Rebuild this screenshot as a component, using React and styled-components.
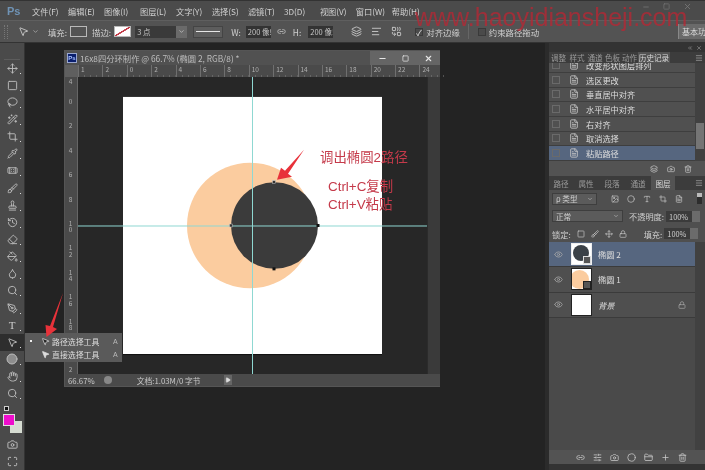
import React from 'react';
import styled, { createGlobalStyle } from 'styled-components';
import {
  MousePointer2, Move, Square, Lasso, Wand2, Crop, Pipette, Bandage, Brush, Stamp, History, Eraser,
  PaintBucket, Droplet, Hand as HandIcon, Search, Eye, Lock, Link2, Layers, FolderClosed, Trash2,
  Camera, FileText, Image as ImageIcon, Circle, Type, Minus, X, Maximize, Plus, ChevronDown, ChevronsLeft, Menu,
  PenTool, Play, SlidersHorizontal, AlignLeft, Combine,
} from 'lucide-react';

const Global = createGlobalStyle`
  html, body { margin: 0; padding: 0; background: #232323; overflow: hidden; }
  * { box-sizing: border-box; }
`;

const Shell = styled.div`
  position: relative; width: 705px; height: 470px; display: flex; flex-direction: column; overflow: hidden;
  font-family: "Noto Sans CJK SC", "Liberation Sans", sans-serif; color: #c9c9c9; background: #232323;
  filter: blur(0.4px);
`;
const MenuBar = styled.div`
  height: 20px; flex: none; display: flex; align-items: center; background: #4b4b4b; border-top: 1px solid #333; padding-left: 7px; position: relative;
`;
const PsLogo = styled.div`
  width: 15px; font: bold 11px "Liberation Sans", sans-serif; color: #6f93b5; margin-right: 10px;
`;
const MenuList = styled.div` display: flex; gap: 10.3px; `;
const MenuItem = styled.span` font-size: 8.2px; width: 25.7px; white-space: nowrap; color: #d0d0d0; `;
const WinControls = styled.div`
  margin-left: auto; width: 50px; margin-right: 13px; margin-bottom: 8px; display: flex; justify-content: space-between; align-items: center; color: #7c7c7c;
`;
const OptionsBar = styled.div`
  height: 23px; flex: none; display: flex; align-items: center; background: #535353; border-top: 1px solid #5f5f5f; border-bottom: 1px solid #333; padding-left: 4px; font-size: 8.4px;
`;
const Grip = styled.div` width: 4px; height: 14px; margin-right: 10px; border-left: 1px dotted #777; border-right: 1px dotted #777; `;
const OptLabel = styled.span` color: #cfcfcf; white-space: nowrap; margin-left: ${p => p.$ml || 0}px; `;
const ShapeSwatch = styled.div`
  width: 17px; height: 11px; border: 1px solid #b9b9b9; margin-left: ${p => p.$ml || 3}px; background: ${p => p.$stroke ? 'linear-gradient(to top left,#fff 44%,#c23b48 46%,#c23b48 54%,#fff 56%)' : 'transparent'};
`;
const NumField = styled.div`
  width: ${p => p.$w}px; height: 12px; margin-left: ${p => p.$ml || 0}px; background: ${p => p.$bg || '#3a3a3a'}; color: #c4c4c4; display: flex; align-items: center; padding-left: 2px; font-size: 7.5px; white-space: nowrap; overflow: hidden;
`;
const DropBtn = styled.div`
  width: ${p => p.$w || 11}px; height: 12px; background: #6a6a6a; display: flex; align-items: center; justify-content: center; color: #ddd;
`;
const LineDrop = styled.div`
  width: 30px; height: 12px; margin-left: 6px; background: #5d5d5d; border: 1px solid #444; display: flex; align-items: center; padding: 0 2px;
  &::before { content: ""; flex: 1; height: 1px; background: #e6e6e6; }
`;
const IconSlot = styled.span` display: inline-flex; margin-left: ${p => p.$ml || 0}px; color: ${p => p.$c || '#c8c8c8'}; `;
const Check = styled.span`
  width: 8px; height: 8px; margin-left: ${p => p.$ml || 0}px; margin-right: 3px; background: #4a4a4a; border: 1px solid #3a3a3a; color: #eee; font-size: 8px; line-height: 7px;
`;
const VSep = styled.span` width: 1px; height: 15px; background: #666; margin-left: 8px; `;
const WorkBtn = styled.div`
  margin-left: auto; width: 27px; height: 15px; background: #6a6a6a; border-left: 1px solid #888; font-size: 8px; color: #ddd; padding-left: 3px; white-space: nowrap; overflow: hidden; line-height: 15px;
`;
const Main = styled.div` flex: 1; display: flex; min-height: 0; `;
const Tools = styled.div`
  width: 25px; flex: none; background: #4a4a4a; border-right: 1px solid #333; display: flex; flex-direction: column; padding-top: 7px;
`;
const ToolHead = styled.div` height: 9.5px; flex: none; border-bottom: 1px solid #5c5c5c; margin: 0 4px; `;
const Tool = styled.div`
  height: 17.15px; flex: none; display: flex; align-items: center; justify-content: center; color: #bdbdbd; position: relative;
  background: ${p => p.$active ? '#2e2e2e' : 'transparent'};
  &::after { content: ""; position: absolute; right: 3px; bottom: 3px; width: 1px; height: 1px; background: #ddd; }
`;
const ToolText = styled.span` font: 11px "Liberation Serif", serif; color: #d0d0d0; `;
const ColorBox = styled.div` position: relative; height: 22px; flex: none; margin-top: 12px; margin-left: 3px; `;
const MiniColors = styled.div`
  position: absolute; top: -8px; left: 1px; width: 5px; height: 5px; background: #111; border: 1px solid #ccc;
`;
const Fg = styled.div` position: absolute; left: 0; top: 0; width: 12px; height: 12px; background: #ee0ccc; border: 1px solid #ddd; z-index: 1; `;
const Bg = styled.div` position: absolute; left: 7px; top: 7px; width: 12px; height: 12px; background: #d6dcd2; `;
const BottomTool = styled.div` height: 17px; flex: none; display: flex; align-items: center; justify-content: center; color: #c4c4c4; `;
const Desk = styled.div` flex: 1; position: relative; background: #232323; `;
const DocWindow = styled.div`
  position: absolute; left: 39px; top: 7px; width: 376px; height: 337px; background: #3b3b3b; display: flex; flex-direction: column; border: 1px solid #555; border-width: 1px 0 1px 1px;
`;
const DocTitle = styled.div`
  height: 14px; flex: none; display: flex; align-items: center; background: #515151; padding-left: 2px; font-size: 8.3px; color: #bdbdbd; white-space: nowrap;
`;
const DocPs = styled.span`
  width: 10px; height: 10px; background: #0a1f6e; border: 1px solid #9aa7cf; color: #a8c0ff; font: bold 6px "Liberation Sans", sans-serif; display: flex; align-items: center; justify-content: center; margin-right: 3px;
`;
const DocBtns = styled.div`
  margin-left: auto; width: 70px; height: 14px; background: #656565; display: flex; align-items: center; justify-content: space-around; color: #e6e6e6;
`;
const RulerTop = styled.div`
  height: 12px; flex: none; display: flex; background: #4a4a4a; color: #b0b0b0; font-size: 6.5px; padding-right: 13px;
`;
const RulerCorner = styled.div` width: 13px; flex: none; background: #5f5f5f; `;
const RulerCell = styled.span`
  width: 24.4px; flex: none; padding-left: 2px; line-height: 9px; border-left: 1px solid #6f6f6f; background: repeating-linear-gradient(to right, transparent 0 5px, #666 5px 6px) bottom / 100% 2px no-repeat;
`;
const DocBody = styled.div` flex: 1; display: flex; min-height: 0; `;
const RulerLeft = styled.div`
  width: 13px; flex: none; background: #4a4a4a; overflow: hidden; color: #b0b0b0; font-size: 6.5px; line-height: 6.5px; border-right: 1px solid #666;
`;
const RulerVCell = styled.div`
  height: 24.4px; width: 7px; margin-left: 2px; white-space: pre-line; padding-top: 1px; text-align: center;
  &:first-child { height: 20px; }
`;
const Stage = styled.div` flex: 1; position: relative; background: #272727; min-width: 0; `;
const Art = styled.svg` display: block; width: 100%; height: 100%; `;
const Note = styled.div`
  position: absolute; left: ${p => p.$x}px; top: ${p => p.$y}px; color: #c53a4a; font-size: 13.4px; line-height: 16px; white-space: nowrap; font-family: "Liberation Sans", "Noto Sans CJK SC", sans-serif;
`;
const DocScroll = styled.div` width: 13px; flex: none; background: #3a3a3a; border-left: 1px solid #2b2b2b; `;
const Status = styled.div`
  height: 12px; flex: none; display: flex; align-items: center; background: #4a4a4a; font-size: 7.8px; color: #c8c8c8; padding-left: 3px; white-space: nowrap;
`;
const StatusDot = styled.span` width: 8px; height: 8px; border-radius: 50%; background: #888; margin-left: 9px; `;
const StatusDoc = styled.span` margin-left: 25px; width: 87px; `;
const StatusPlay = styled.span` color: #ddd; display: inline-flex; background: #666; padding: 2px 1px; `;
const Flyout = styled.div`
  position: absolute; left: 0; top: 290px; width: 97px; height: 29px; background: #5a5a5a; display: flex; flex-direction: column; justify-content: center; z-index: 3;
`;
const FlyRow = styled.div` display: flex; align-items: center; height: 13px; font-size: 7.9px; color: #ddd; padding-left: 5px; white-space: nowrap; `;
const FlyDot = styled.span` width: 2px; height: 2px; background: ${p => p.$on ? '#eee' : 'transparent'}; margin-right: 9px; `;
const FlyName = styled.span` margin-left: 2px; width: 61px; `;
const FlyKey = styled.span` font: 7px "Liberation Sans", sans-serif; color: #bbb; `;
const Panels = styled.div` width: 160px; flex: none; display: flex; background: #3a3a3a; `;
const PanelEdge = styled.div` width: 4px; flex: none; background: #2b2b2b; `;
const PanelCol = styled.div` flex: 1; display: flex; flex-direction: column; min-width: 0; background: #4b4b4b; `;
const CollapseBar = styled.div` height: ${p => p.$h || 9}px; flex: none; background: #333; display: flex; justify-content: flex-end; align-items: center; padding-right: 3px; color: #aaa; gap: 3px; `;
const TabRow = styled.div` height: ${p => p.$h || 11}px; flex: none; display: flex; align-items: stretch; background: #3c3c3c; font-size: 7.6px; color: #999; position: relative; white-space: nowrap; `;
const Tab = styled.div`
  width: ${p => p.$w}px; flex: none; display: flex; align-items: center; justify-content: center;
  background: ${p => p.$on ? '#535353' : 'transparent'}; color: ${p => p.$on ? '#d8d8d8' : '#9a9a9a'};
`;
const TabMenu = styled.div` margin-left: auto; display: flex; align-items: center; padding-right: 2px; color: #aaa; `;
const Split = styled.div` display: flex; height: ${p => p.$h}px; flex: none; min-height: 0; `;
const HistList = styled.div` flex: 1; overflow: hidden; display: flex; flex-direction: column; justify-content: flex-end; min-width: 0; `;
const HistRow = styled.div`
  height: 14.7px; flex: none; display: flex; align-items: center; font-size: 8.2px; white-space: nowrap; padding-left: 3px; color: #ddd;
  background: ${p => p.$on ? '#56667f' : '#505050'}; border-bottom: 1px solid #3e3e3e;
`;
const HistCheck = styled.span` width: 8px; height: 8px; border: 1px solid #6a6a6a; margin-right: 9px; flex: none; `;
const HistIcon = styled.span` display: inline-flex; color: #c9c9c9; margin-right: 7px; `;
const Scroll = styled.div` width: 10px; flex: none; background: #414141; position: relative; `;
const Thumb = styled.div` position: absolute; left: 1px; right: 1px; top: ${p => p.$t}px; height: ${p => p.$h}px; background: #757575; `;
const PanelFoot = styled.div`
  height: ${p => p.$h || 12}px; flex: none; background: #535353; display: flex; align-items: center; justify-content: flex-end; gap: ${p => p.$gap || 11}px; padding-right: ${p => p.$pr || 12}px; color: #ccc;
`;
const LayerTools = styled.div` height: ${p => p.$h}px; flex: none; background: #4f4f4f; display: flex; align-items: center; padding-left: 3px; font-size: 8.2px; color: #cfcfcf; white-space: nowrap; `;
const Select = styled.div`
  width: ${p => p.$w}px; height: 12px; background: #5b5b5b; border: 1px solid #3e3e3e; display: flex; align-items: center; justify-content: space-between; padding: 0 3px; font-size: 7.6px; color: #d0d0d0; flex: none;
`;
const FilterIcons = styled.div` display: flex; gap: ${p => p.$gap}px; margin-left: ${p => p.$ml}px; color: #c8c8c8; align-items: center; `;
const FilterSwitch = styled.span` width: 5px; height: 11px; background: #2d2d2d; margin-left: 14px; border-top: 4px solid #bbb; `;
const Pct = styled.span` width: 26px; height: 11px; background: #3b3b3b; margin-left: 2px; font-size: 7.4px; color: #ccc; line-height: 11px; padding-left: 3px; flex: none; `;
const PctBtn = styled.span` width: 8px; height: 11px; background: #6b6b6b; flex: none; `;
const LayerArea = styled.div` flex: 1; display: flex; min-height: 0; `;
const LayerList = styled.div` flex: 1; background: #4a4a4a; min-width: 0; `;
const LayerRow = styled.div`
  height: 25.3px; display: flex; align-items: center; padding-left: 5px; font-size: 8.2px; color: #ddd;
  background: ${p => p.$on ? '#56667f' : '#4f4f4f'}; border-bottom: 1px solid #3b3b3b;
`;
const EyeCell = styled.span` display: inline-flex; color: #aaa; width: 17px; flex: none; `;
const Thumbnail = styled.div`
  width: 21px; height: 22px; flex: none; position: relative; background: ${p => p.$bg}; border: 1px solid ${p => p.$on ? '#eee' : '#222'}; margin-right: 6px; overflow: hidden;
`;
const ThumbShape = styled.div`
  position: absolute; left: ${p => p.$l}px; top: ${p => p.$t}px; width: ${p => p.$s}px; height: ${p => p.$s}px; border-radius: 50%; background: ${p => p.$c};
`;
const ThumbBadge = styled.div`
  position: absolute; right: 0; bottom: 0; width: 8px; height: 8px; background: #555; border: 1px solid ${p => p.$on ? '#ddd' : '#222'};
`;
const LayerName = styled.span` font-style: ${p => p.$i ? 'italic' : 'normal'}; `;
const LockSlot = styled.span` margin-left: auto; margin-right: 9px; display: inline-flex; color: #aaa; `;
const Watermark = styled.div`
  position: absolute; left: 415px; top: 7px; font: 25px/20px "Liberation Sans", sans-serif; color: rgba(190, 36, 50, 0.72); white-space: nowrap; z-index: 5;
`;
const BigArrow = styled.svg` position: absolute; left: 40px; top: 290px; width: 30px; height: 50px; z-index: 6; `;

const menus = ['文件(F)', '编辑(E)', '图像(I)', '图层(L)', '文字(Y)', '选择(S)', '滤镜(T)', '3D(D)', '视图(V)', '窗口(W)', '帮助(H)'];
const toolIcons = [Move, Square, Lasso, Wand2, Crop, Pipette, Bandage, Brush, Stamp, History, Eraser, PaintBucket, Droplet, Search, PenTool];
const rulerTop = ['1', '2', '0', '2', '4', '6', '8', '10', '12', '14', '16', '18', '20', '22', '24'];
const rulerLeft = ['4', '0', '2', '4', '6', '8', '1\n0', '1\n2', '1\n4', '1\n6', '1\n8', '', '2'];
const history = ['改变形状图层排列', '选区更改', '垂直居中对齐', '水平居中对齐', '右对齐', '取消选择', '粘贴路径'];
const histTabs = [['调整', 19], ['样式', 18], ['通道', 18], ['色板', 17], ['动作', 17], ['历史记录', 32]];
const layTabs = [['路径', 24], ['属性', 26], ['段落', 26], ['通道', 26], ['图层', 24]];

export default function App() {
  return (
    <Shell>
      <Global />
      <MenuBar>
        <PsLogo>Ps</PsLogo>
        <MenuList>{menus.map(m => <MenuItem key={m}>{m}</MenuItem>)}</MenuList>
        <WinControls>
          <Minus size={8} /><Square size={7} /><X size={9} />
        </WinControls>
      </MenuBar>
      <OptionsBar>
        <Grip />
        <IconSlot><MousePointer2 size={11} /></IconSlot>
        <IconSlot $ml={3}><ChevronDown size={7} /></IconSlot>
        <OptLabel $ml={9}>填充:</OptLabel>
        <ShapeSwatch />
        <OptLabel $ml={5}>描边:</OptLabel>
        <ShapeSwatch $stroke />
        <NumField $w={41} $ml={4}>3 点</NumField>
        <DropBtn><ChevronDown size={7} /></DropBtn>
        <LineDrop />
        <OptLabel $ml={8}>W:</OptLabel>
        <NumField $w={25} $ml={5} $bg="#333">200 像!</NumField>
        <IconSlot $ml={6}><Link2 size={9} /></IconSlot>
        <OptLabel $ml={7}>H:</OptLabel>
        <NumField $w={25} $ml={7} $bg="#333">200 像!</NumField>
        <IconSlot $ml={18}><Layers size={11} /></IconSlot>
        <IconSlot $ml={9}><AlignLeft size={11} /></IconSlot>
        <IconSlot $ml={9}><Combine size={11} /></IconSlot>
        <Check $ml={13}>✓</Check>
        <OptLabel>对齐边缘</OptLabel>
        <VSep />
        <Check $ml={9} />
        <OptLabel>约束路径拖动</OptLabel>
        <WorkBtn>基本功</WorkBtn>
      </OptionsBar>
      <Main>
        <Tools>
          <ToolHead />
          {toolIcons.map((I, i) => <Tool key={i}><I size={11} /></Tool>)}
          <Tool><ToolText>T</ToolText></Tool>
          <Tool $active><MousePointer2 size={11} /></Tool>
          <Tool><Circle size={12} fill="#8d8d8d" /></Tool>
          <Tool><HandIcon size={11} /></Tool>
          <Tool><Search size={11} /></Tool>
          <ColorBox>
            <MiniColors />
            <Bg />
            <Fg />
          </ColorBox>
          <BottomTool><Camera size={11} /></BottomTool>
          <BottomTool><Maximize size={11} /></BottomTool>
        </Tools>
        <Desk>
          <DocWindow>
            <DocTitle>
              <DocPs>Ps</DocPs>
              16x8四分环制作 @ 66.7% (椭圆 2, RGB/8) *
              <DocBtns>
                <Minus size={9} strokeWidth={3} /><Square size={7} strokeWidth={2.5} /><X size={9} strokeWidth={3} />
              </DocBtns>
            </DocTitle>
            <RulerTop>
              <RulerCorner />
              {rulerTop.map((n, i) => <RulerCell key={i}>{n}</RulerCell>)}
            </RulerTop>
            <DocBody>
              <RulerLeft>
                {rulerLeft.map((n, i) => <RulerVCell key={i}>{n}</RulerVCell>)}
              </RulerLeft>
              <Stage>
                <Art viewBox="78 77 349 298" preserveAspectRatio="none">
                  <rect x="123" y="97" width="259" height="258" fill="#fff" />
                  <rect x="123" y="355" width="259" height="1" fill="#111" />
                  <circle cx="250" cy="226" r="63" fill="#fbcc9f" />
                  <circle cx="274.5" cy="226" r="43.5" fill="#3b3b3b" />
                  <line x1="252.5" y1="77" x2="252.5" y2="375" stroke="#8fd8d2" strokeWidth="1" />
                  <line x1="78" y1="226.5" x2="427" y2="226.5" stroke="#8fd8d2" strokeWidth="1" />
                  <rect x="229.5" y="224.5" width="3" height="3" fill="#333" stroke="#ccc" strokeWidth=".5" />
                  <rect x="316.5" y="224.5" width="3" height="3" fill="#111" />
                  <rect x="272.5" y="181" width="3" height="3" fill="#333" stroke="#ccc" strokeWidth=".5" />
                  <rect x="272.5" y="268" width="3" height="3" fill="#111" />
                  <polygon points="277,180 281,168 285,171 304,150 288,174 292,177" fill="#e8323a" />
                </Art>
                <Note $x={242} $y={73}>调出椭圆2路径</Note>
                <Note $x={250} $y={102}>Ctrl+C复制</Note>
                <Note $x={250} $y={120}>Ctrl+V粘贴</Note>
              </Stage>
              <DocScroll />
            </DocBody>
            <Status>
              66.67%
              <StatusDot />
              <StatusDoc>文档:1.03M/0 字节</StatusDoc>
              <StatusPlay><Play size={6} fill="#ddd" /></StatusPlay>
            </Status>
          </DocWindow>
          <Flyout>
            <FlyRow><FlyDot $on /><MousePointer2 size={9} fill="#222" /><FlyName>路径选择工具</FlyName><FlyKey>A</FlyKey></FlyRow>
            <FlyRow><FlyDot /><MousePointer2 size={9} fill="#ddd" /><FlyName>直接选择工具</FlyName><FlyKey>A</FlyKey></FlyRow>
          </Flyout>
        </Desk>
        <Panels>
          <PanelEdge />
          <PanelCol>
            <CollapseBar><ChevronsLeft size={6} /><X size={6} /></CollapseBar>
            <TabRow>
              {histTabs.map(([t, w]) => <Tab key={t} $w={w} $on={t === '历史记录'}>{t}</Tab>)}
              <TabMenu><Menu size={8} /></TabMenu>
            </TabRow>
            <Split $h={98}>
              <HistList>
                {history.map((h, i) => (
                  <HistRow key={h} $on={i === 6}>
                    <HistCheck />
                    <HistIcon><FileText size={10} /></HistIcon>
                    {h}
                  </HistRow>
                ))}
              </HistList>
              <Scroll><Thumb $t={60} $h={26} /></Scroll>
            </Split>
            <PanelFoot $h={15} $gap={9} $pr={13}>
              <Layers size={8} /><Camera size={8} /><Trash2 size={8} />
            </PanelFoot>
            <TabRow $h={14}>
              {layTabs.map(([t, w]) => <Tab key={t} $w={w} $on={t === '图层'}>{t}</Tab>)}
              <TabMenu><Menu size={8} /></TabMenu>
            </TabRow>
            <LayerTools $h={17}>
              <Select $w={45}><span>ρ 类型</span><ChevronDown size={6} /></Select>
              <FilterIcons $gap={8} $ml={14}>
                <ImageIcon size={8} /><Circle size={8} /><Type size={8} /><Crop size={8} /><FileText size={8} />
              </FilterIcons>
              <FilterSwitch />
            </LayerTools>
            <LayerTools $h={18}>
              <Select $w={71}><span>正常</span><ChevronDown size={6} /></Select>
              <OptLabel $ml={6}>不透明度:</OptLabel>
              <Pct>100%</Pct><PctBtn />
            </LayerTools>
            <LayerTools $h={17}>
              <OptLabel>锁定:</OptLabel>
              <FilterIcons $gap={6} $ml={6}>
                <Square size={8} /><Brush size={8} /><Move size={8} /><Lock size={8} />
              </FilterIcons>
              <OptLabel $ml={17}>填充:</OptLabel>
              <Pct>100%</Pct><PctBtn />
            </LayerTools>
            <LayerArea>
              <LayerList>
                <LayerRow $on>
                  <EyeCell><Eye size={9} /></EyeCell>
                  <Thumbnail $bg="#fff" $on>
                    <ThumbShape $l={1} $t={1} $s={16} $c="#3b4147" />
                    <ThumbBadge $on />
                  </Thumbnail>
                  <LayerName>椭圆 2</LayerName>
                </LayerRow>
                <LayerRow>
                  <EyeCell><Eye size={9} /></EyeCell>
                  <Thumbnail $bg="#fff">
                    <ThumbShape $l={-2} $t={1} $s={19} $c="#fbcc9f" />
                    <ThumbBadge />
                  </Thumbnail>
                  <LayerName>椭圆 1</LayerName>
                </LayerRow>
                <LayerRow>
                  <EyeCell><Eye size={9} /></EyeCell>
                  <Thumbnail $bg="#fff" />
                  <LayerName $i>背景</LayerName>
                  <LockSlot><Lock size={8} /></LockSlot>
                </LayerRow>
              </LayerList>
              <Scroll />
            </LayerArea>
            <PanelFoot $h={14} $gap={8} $pr={18}>
              <Link2 size={9} /><SlidersHorizontal size={9} /><Camera size={9} /><Circle size={9} /><FolderClosed size={9} /><Plus size={9} /><Trash2 size={9} />
            </PanelFoot>
            <CollapseBar $h={6} />
          </PanelCol>
        </Panels>
      </Main>
      <Watermark>www.haoyidiansheji.com</Watermark>
      <BigArrow viewBox="40 290 30 50">
        <polygon points="46.5,337 45.5,325 50,326 63,293 53,327 57,329" fill="#e8323a" />
      </BigArrow>
    </Shell>
  );
}
